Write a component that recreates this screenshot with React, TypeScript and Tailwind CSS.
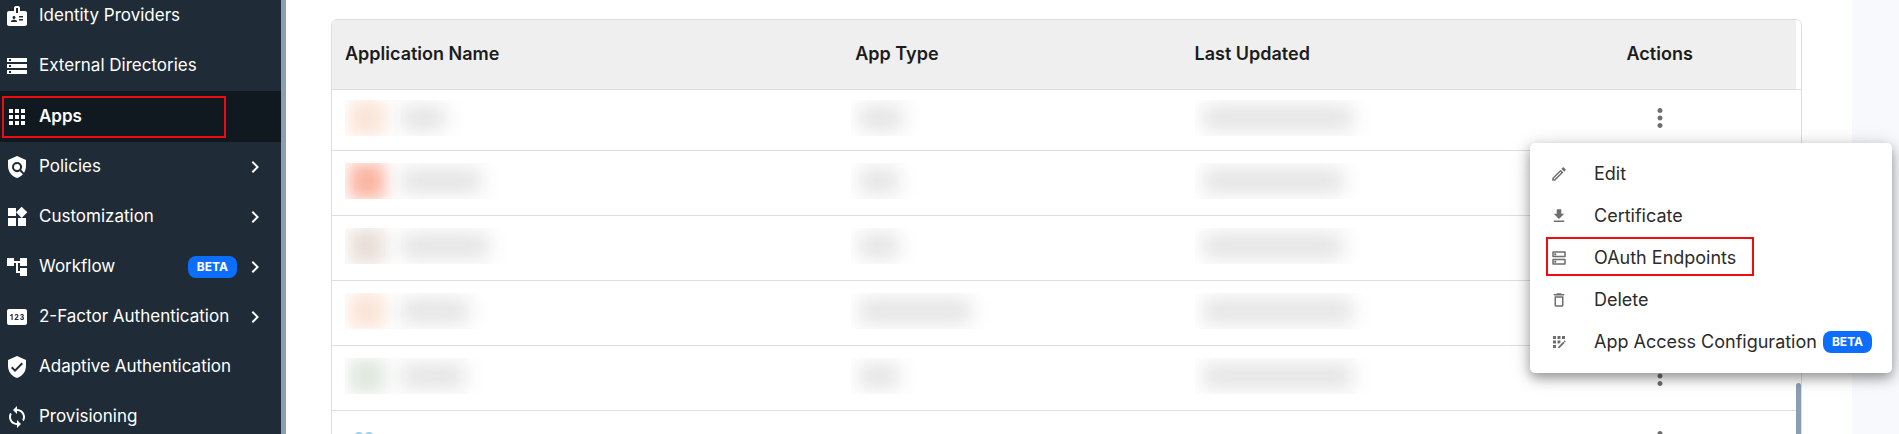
import {
  MdAccountTree,
  MdAppRegistration,
  MdApps,
  MdBadge,
  MdChevronRight,
  MdDeleteOutline,
  MdDownload,
  MdMoreVert,
  MdOutlineDns,
  MdOutlineEdit,
  MdPin,
  MdPolicy,
  MdStorage,
  MdSync,
  MdVerifiedUser,
  MdWidgets,
} from "react-icons/md";
import type { IconType } from "react-icons";
import clsx from "clsx";

type NavItem = {
  label: string;
  icon: IconType;
  active?: boolean;
  beta?: boolean;
  expandable?: boolean;
};

const navItems: NavItem[] = [
  { label: "Identity Providers", icon: MdBadge },
  { label: "External Directories", icon: MdStorage },
  { label: "Apps", icon: MdApps, active: true },
  { label: "Policies", icon: MdPolicy, expandable: true },
  { label: "Customization", icon: MdWidgets, expandable: true },
  { label: "Workflow", icon: MdAccountTree, beta: true, expandable: true },
  { label: "2-Factor Authentication", icon: MdPin, expandable: true },
  { label: "Adaptive Authentication", icon: MdVerifiedUser },
  { label: "Provisioning", icon: MdSync },
];

const menuItems: {
  label: string;
  icon: IconType;
  highlighted?: boolean;
  beta?: boolean;
}[] = [
  { label: "Edit", icon: MdOutlineEdit },
  { label: "Certificate", icon: MdDownload },
  { label: "OAuth Endpoints", icon: MdOutlineDns, highlighted: true },
  { label: "Delete", icon: MdDeleteOutline },
  { label: "App Access Configuration", icon: MdAppRegistration, beta: true },
];

// Hidden values: only the tint and the rough length of each one are shown.
const rows = [
  { id: 1, tint: "bg-[#fbe5d8]", name: "w-11", type: "w-11", date: "w-[150px]" },
  { id: 2, tint: "bg-[#fbb5a2]", name: "w-20", type: "w-10", date: "w-[140px]" },
  { id: 3, tint: "bg-[#eadfd8]", name: "w-[88px]", type: "w-10", date: "w-[140px]" },
  { id: 4, tint: "bg-[#fbe5d8]", name: "w-[68px]", type: "w-[112px]", date: "w-[150px]" },
  { id: 5, tint: "bg-[#e1e9df]", name: "w-16", type: "w-10", date: "w-[150px]" },
];

const BetaBadge = () => (
  <span className="flex h-[22px] items-center rounded-lg bg-[#0d6efd] px-[9px] text-xs font-bold text-white">
    BETA
  </span>
);

const Redacted = ({ width }: { width: string }) => (
  <span className="flex h-9 items-center overflow-hidden pl-2">
    <span className={clsx("h-6 rounded bg-[#e2e2e2] blur-[10px]", width)} />
  </span>
);

const Sidebar = () => (
  <aside className="flex w-[286px] shrink-0 overflow-hidden border-r-[5px] border-[#8a9fb3] bg-[#1f2c37]">
    <nav className="-mt-[9px] flex w-full flex-col">
      {navItems.map(({ label, icon: Icon, active, beta, expandable }) => (
        <a
          key={label}
          href="#"
          className={clsx(
            "relative flex shrink-0 items-center pl-[5px] pr-3.5 text-[17px] text-white",
            active ? "h-[51px] bg-[#111920] font-semibold" : "h-[50px]",
          )}
        >
          <Icon className="size-6 shrink-0" />
          <span className="ml-2.5 flex-1 whitespace-nowrap">{label}</span>
          {beta && <BetaBadge />}
          {expandable && <MdChevronRight className="ml-1.5 size-6 shrink-0" />}
          {active && (
            <span className="absolute bottom-1 left-0.5 top-[5px] w-56 border-2 border-[#ee0c12]" />
          )}
        </a>
      ))}
    </nav>
  </aside>
);

const RowActions = () => (
  <button type="button" aria-label="Row actions" className="mx-auto block">
    <MdMoreVert className="size-[30px] text-[#6e6e6e]" />
  </button>
);

const AppsTable = () => (
  <div className="relative overflow-hidden rounded-t-md border border-[#dedede] bg-white">
    <table className="w-full table-fixed border-collapse text-left">
      <colgroup>
        <col className="w-[34.8%]" />
        <col className="w-[23.1%]" />
        <col className="w-[23.2%]" />
        <col />
        <col className="w-[5px]" />
      </colgroup>
      <thead>
        <tr className="h-[69px] border-b border-[#dedede] bg-[#efefef] text-lg text-[#1c1c1c]">
          <th className="px-[13px] font-semibold">Application Name</th>
          <th className="px-3 font-semibold">App Type</th>
          <th className="px-3 font-semibold">Last Updated</th>
          <th className="px-3 text-center font-semibold">Actions</th>
          <td className="bg-white" />
        </tr>
      </thead>
      <tbody>
        {rows.map((row) => (
          <tr
            key={row.id}
            className="h-[65px] border-b border-[#dedede] first:h-[61px]"
          >
            <td className="px-[13px] pb-1">
              <div className="flex h-9 items-center gap-4 overflow-hidden pl-1">
                <span className={clsx("h-9 w-9 blur-[8px]", row.tint)} />
                <span
                  className={clsx("h-6 rounded bg-[#e2e2e2] blur-[10px]", row.name)}
                />
              </div>
            </td>
            <td className="px-2 pb-1">
              <Redacted width={row.type} />
            </td>
            <td className="px-3 pb-1">
              <Redacted width={row.date} />
            </td>
            <td className="pb-1">
              <RowActions />
            </td>
            <td />
          </tr>
        ))}
        <tr className="h-[65px]">
          <td className="px-[13px]">
            <svg viewBox="0 0 36 24" className="ml-2 h-6 w-9" fill="#9fd0e6">
              <circle cx="6" cy="6" r="5" />
              <circle cx="16" cy="6" r="5" />
              <rect x="1" y="8" width="20" height="14" rx="3" />
            </svg>
          </td>
          <td />
          <td />
          <td className="pb-1">
            <RowActions />
          </td>
          <td />
        </tr>
      </tbody>
    </table>
    <span className="absolute bottom-0 right-0 top-[363px] w-[5px] rounded-t-full bg-[#8a9fb3]" />
  </div>
);

const ActionsMenu = () => (
  <div
    role="menu"
    className="absolute right-[7px] top-[143px] w-[362px] rounded-[5px] bg-white py-2.5 shadow-[0_5px_12px_rgba(0,0,0,0.35),0_3px_22px_rgba(0,0,0,0.14)]"
  >
    {menuItems.map(({ label, icon: Icon, highlighted, beta }) => (
      <button
        key={label}
        type="button"
        role="menuitem"
        className="relative flex h-[42px] w-full items-center pl-5 text-lg text-[#2b2b2b]"
      >
        <Icon className="size-[18px] shrink-0 text-[#6e6e6e]" />
        <span className="ml-[26px] mr-1.5 whitespace-nowrap">{label}</span>
        {beta && <BetaBadge />}
        {highlighted && (
          <span className="absolute left-4 top-0 h-[39px] w-52 border-2 border-[#ee0c12]" />
        )}
      </button>
    ))}
  </div>
);

const App = () => (
  <div className="relative flex h-screen overflow-hidden bg-[#f7f9fc] font-['Inter','Liberation_Sans',sans-serif]">
    <Sidebar />
    <main className="mr-[47px] min-w-0 flex-1 bg-white pl-[45px] pr-[50px] pt-[19px]">
      <AppsTable />
    </main>
    <ActionsMenu />
  </div>
);

export default App;
